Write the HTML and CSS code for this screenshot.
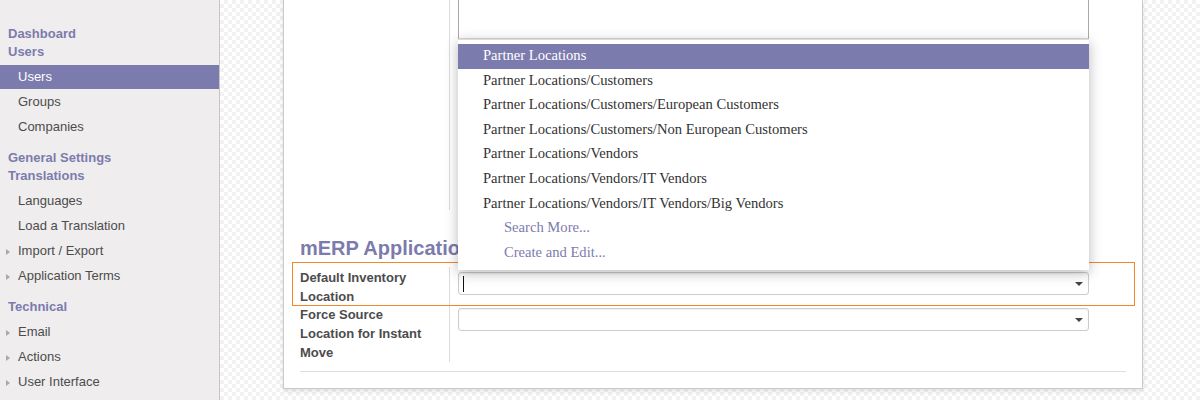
FILE: index.html
```html
<!DOCTYPE html>
<html>
<head>
<meta charset="utf-8">
<link rel="stylesheet" href="styles.css">
</head>
<body>
<div class="app">
  <nav class="sidebar">
    <div class="section">
      <div class="head">Dashboard</div>
      <div class="head">Users</div>
      <ul class="items">
        <li class="item active">Users</li>
        <li class="item">Groups</li>
        <li class="item">Companies</li>
      </ul>
    </div>
    <div class="section">
      <div class="head">General Settings</div>
      <div class="head">Translations</div>
      <ul class="items">
        <li class="item">Languages</li>
        <li class="item">Load a Translation</li>
        <li class="item sub">Import / Export</li>
        <li class="item sub">Application Terms</li>
      </ul>
    </div>
    <div class="section">
      <div class="head">Technical</div>
      <ul class="items">
        <li class="item sub">Email</li>
        <li class="item sub">Actions</li>
        <li class="item sub">User Interface</li>
      </ul>
    </div>
  </nav>
  <main class="main">
    <div class="card">
      <div class="group-top">
        <div class="label-cell"></div>
        <div class="value-cell">
          <div class="textarea"></div>
        </div>
      </div>
      <h2 class="group-title">mERP Application</h2>
      <div class="rows">
        <div class="row row-active">
          <div class="label-cell label-first">Default Inventory Location</div>
          <div class="value-cell value-first">
            <div class="select"><span class="caret"></span><span class="arrow"></span></div>
          </div>
        </div>
        <div class="row row-second">
          <div class="label-cell">Force Source Location for Instant Move</div>
          <div class="value-cell value-second">
            <div class="select"><span></span><span class="arrow"></span></div>
          </div>
        </div>
      </div>
      <div class="rule"></div>
      <ul class="dropdown">
        <li class="opt selected">Partner Locations</li>
        <li class="opt">Partner Locations/Customers</li>
        <li class="opt">Partner Locations/Customers/European Customers</li>
        <li class="opt">Partner Locations/Customers/Non European Customers</li>
        <li class="opt">Partner Locations/Vendors</li>
        <li class="opt">Partner Locations/Vendors/IT Vendors</li>
        <li class="opt">Partner Locations/Vendors/IT Vendors/Big Vendors</li>
        <li class="opt action">Search More...</li>
        <li class="opt action">Create and Edit...</li>
      </ul>
    </div>
  </main>
</div>
</body>
</html>
```

FILE: styles.css
```css
* { box-sizing: border-box; }
html, body { margin: 0; padding: 0; }
body {
  width: 1200px;
  height: 400px;
  overflow: hidden;
  font-family: "Liberation Sans", Arial, sans-serif;
  font-size: 13px;
  color: #4c4c4c;
}
.app {
  display: flex;
  height: 400px;
}
.sidebar {
  width: 220px;
  flex: none;
  background: #efeded;
  border-right: 1px solid #c6c6c6;
  padding-top: 16px;
}
.section { margin-top: 9px; }
.head {
  font-weight: bold;
  color: #7c7bad;
  line-height: 18px;
  padding-left: 8px;
}
.items {
  list-style: none;
  margin: 4px 0 0 0;
  padding: 0;
}
.item {
  height: 25px;
  line-height: 24px;
  padding-left: 18px;
  color: #4c4c4c;
}
.item.active {
  background: #7c7bad;
  color: #fff;
  height: 24px;
  margin-bottom: 1px;
}
.item.sub::before {
  content: "";
  display: inline-block;
  width: 0;
  height: 0;
  border-left: 4px solid #a8a8a8;
  border-top: 3.5px solid transparent;
  border-bottom: 3.5px solid transparent;
  margin-left: -12px;
  margin-right: 8px;
  vertical-align: 0;
}
.main {
  flex: 1;
  display: flex;
  align-items: flex-start;
  padding-left: 63px;
  background-color: #fff;
  background-image: repeating-conic-gradient(#f2f2f2 0 25%, #ffffff 0 50%);
  background-size: 8px 8px;
}
.card {
  position: relative;
  width: 860px;
  background: #fff;
  border: 1px solid #c9c8d3;
  border-top: none;
  padding: 0 16px 16px 16px;
  box-shadow: 0 2px 5px rgba(0, 0, 0, 0.12);
}
.group-top {
  display: grid;
  grid-template-columns: 150px 1fr;
  height: 210px;
}
.label-cell {
  border-right: 1px solid #dcdcdc;
}
.value-cell {
  padding-left: 8px;
}
.textarea {
  width: 631px;
  height: 39px;
  border: 1px solid #a9a9a9;
  border-top: none;
  border-bottom-color: #dadada;
}
.group-title {
  margin: 26px 0 0 0;
  font-size: 20px;
  line-height: 24px;
  font-weight: bold;
  color: #7c7bad;
}
.rows {
  margin: 3px -8px 0 -7px;
}
.row {
  display: grid;
  grid-template-columns: 150px 1fr;
  padding-left: 7px;
  align-items: start;
}
.row .label-cell {
  font-weight: bold;
  line-height: 19px;
  padding-right: 10px;
}
.row-active {
  height: 42px;
  outline: 1px solid #f5852b;
}
.label-first {
  padding-top: 1px;
  margin-top: 4px;
  height: 39px;
}
.value-first { padding-top: 9px; }
.row-second .label-cell { height: 57px; }
.value-second { padding-top: 3px; }
.select {
  width: 631px;
  height: 23px;
  border: 1px solid #cbcbcb;
  border-radius: 3px;
  background: #fff;
  box-shadow: inset 0 1px 2px rgba(0, 0, 0, 0.06);
  display: flex;
  align-items: center;
  justify-content: space-between;
  padding: 0 5px 0 4px;
}
.caret {
  width: 1px;
  height: 16px;
  background: #111;
}
.arrow {
  width: 0;
  height: 0;
  border-top: 4px solid #444;
  border-left: 4px solid transparent;
  border-right: 4px solid transparent;
}
.rule {
  margin-top: 9px;
  height: 1px;
  background: #dedede;
}
.dropdown {
  position: absolute;
  left: 174px;
  top: 39px;
  width: 631px;
  height: 231px;
  margin: 0;
  padding: 4px 0 0 0;
  list-style: none;
  background: #fff;
  border-top: 1px solid #dcdcdc;
  box-shadow: 0 3px 12px rgba(0, 0, 0, 0.28);
  font-family: "Liberation Serif", "Times New Roman", serif;
  font-size: 14.6px;
  color: #333;
}
.opt {
  height: 24.6px;
  line-height: 22px;
  padding-left: 25px;
  white-space: nowrap;
}
.opt.selected {
  background: #7c7bad;
  color: #fff;
}
.opt.action {
  padding-left: 46px;
  color: #7c7bad;
}
```
